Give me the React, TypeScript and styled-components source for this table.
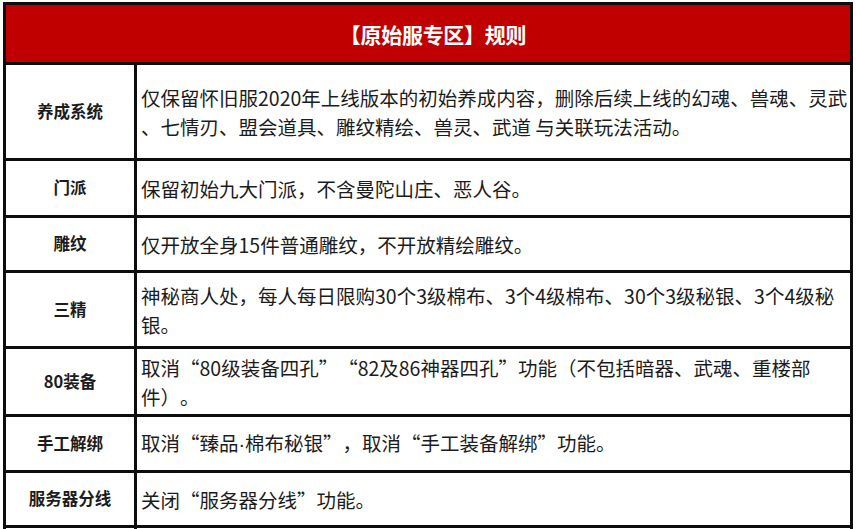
import React from "react";
import styled, { createGlobalStyle } from "styled-components";

const Global = createGlobalStyle`
  html, body { margin: 0; padding: 0; background: #fff; }
  body { font-family: "Noto Sans CJK SC", "Noto Sans", sans-serif; }
`;

const Page = styled.div`
  padding: 2px 3px 0 3px;
  width: 850px;
  height: 527px;
  overflow: hidden;
`;

const Table = styled.div`
  display: flex;
  flex-direction: column;
  gap: 3px;
  padding: 3px;
  background: #0d0d0d;
  width: 850px;
  box-sizing: border-box;
`;

const Header = styled.div`
  height: 57px;
  background: #c00000;
  color: #fff;
  display: flex;
  align-items: center;
  justify-content: center;
  padding-left: 10px;
  font-size: 21px;
  font-weight: 700;
  letter-spacing: -0.3px;
  text-spacing-trim: space-all;
`;

const Row = styled.div<{ $h: number }>`
  display: grid;
  grid-template-columns: 128px 1fr;
  gap: 3px;
  height: ${(p) => p.$h}px;
  flex: none;
`;

const Label = styled.div`
  background: #fff;
  display: flex;
  align-items: center;
  justify-content: center;
  padding-bottom: 2px;
  font-size: 16.5px;
  font-weight: 700;
  color: #1c1c1c;
`;

const Content = styled.div`
  background: #fff;
  display: flex;
  flex-direction: column;
  justify-content: center;
  padding-left: 4px;
  font-size: 19.5px;
  line-height: 29px;
  color: #1c1c1c;
  overflow: hidden;
  text-spacing-trim: space-all;
`;

const Line = styled.span`
  white-space: nowrap;
`;

const Dot = styled.span`
  font-family: "Liberation Sans", sans-serif;
`;

type RowData = { label: string; lines: React.ReactNode[]; h: number };

const rows: RowData[] = [
  {
    label: "养成系统",
    lines: [
      "仅保留怀旧服2020年上线版本的初始养成内容，删除后续上线的幻魂、兽魂、灵武",
      "、七情刃、盟会道具、雕纹精绘、兽灵、武道 与关联玩法活动。",
    ],
    h: 93,
  },
  { label: "门派", lines: ["保留初始九大门派，不含曼陀山庄、恶人谷。"], h: 54 },
  { label: "雕纹", lines: ["仅开放全身15件普通雕纹，不开放精绘雕纹。"], h: 52 },
  {
    label: "三精",
    lines: [
      "神秘商人处，每人每日限购30个3级棉布、3个4级棉布、30个3级秘银、3个4级秘",
      "银。",
    ],
    h: 73,
  },
  {
    label: "80装备",
    lines: [
      "取消“80级装备四孔”“82及86神器四孔”功能（不包括暗器、武魂、重楼部",
      "件）。",
    ],
    h: 65,
  },
  {
    label: "手工解绑",
    lines: [
      <>
        取消“臻品<Dot>·</Dot>棉布秘银”，取消“手工装备解绑”功能。
      </>,
    ],
    h: 53,
  },
  { label: "服务器分线", lines: ["关闭“服务器分线”功能。"], h: 52 },
  { label: "", lines: [""], h: 40 },
];

export default function App() {
  return (
    <Page lang="zh-CN">
      <Global />
      <Table>
        <Header>【原始服专区】规则</Header>
        {rows.map((r, i) => (
          <Row key={i} $h={r.h}>
            <Label>{r.label}</Label>
            <Content>
              {r.lines.map((l, j) => (
                <Line key={j}>{l}</Line>
              ))}
            </Content>
          </Row>
        ))}
      </Table>
    </Page>
  );
}
